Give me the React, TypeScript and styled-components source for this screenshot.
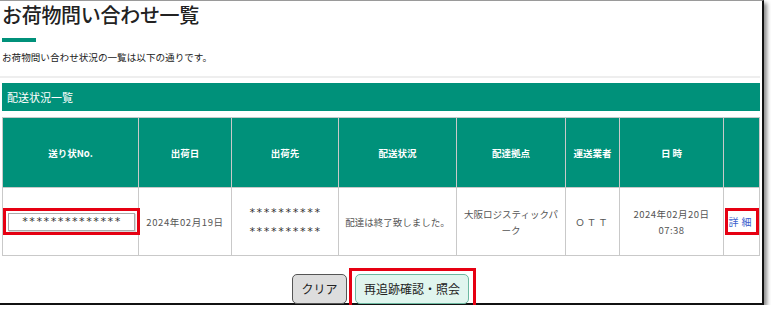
import React from 'react';
import styled, { createGlobalStyle } from 'styled-components';

interface Shipment {
  invoiceNo: string;
  shippedOn: string;
  destination: string[];
  status: string;
  depot: string;
  carrier: string;
  dateTime: string[];
}

const GlobalStyle = createGlobalStyle`
  html, body {
    margin: 0;
    padding: 0;
    background: #ffffff;
  }
  body {
    font-family: "Noto Sans CJK JP", "Noto Sans", sans-serif;
  }
`;

const Frame = styled.div`
  box-sizing: border-box;
  width: 764px;
  height: 305px;
  border-top: 1px solid #9a9a9a;
  border-right: 2px solid #111111;
  border-bottom: 2px solid #111111;
  box-shadow: 3px 3px 4px rgba(0, 0, 0, 0.45);
  background: #ffffff;
  display: flex;
  flex-direction: column;
  padding: 0 2px;

  & > * {
    flex-shrink: 0;
  }
`;

const Title = styled.h1`
  margin: 0;
  padding-top: 1px;
  height: 37px;
  box-sizing: border-box;
  font-size: 20px;
  line-height: 26px;
  font-weight: 500;
  color: #222222;
  letter-spacing: -0.3px;
`;

const TitleBar = styled.div`
  width: 34px;
  height: 4px;
  background: #00917a;
`;

const Lead = styled.p`
  box-sizing: border-box;
  margin: 0;
  padding-top: 9px;
  height: 34px;
  font-size: 9.6px;
  line-height: 12px;
  color: #222222;
`;

const Divider = styled.hr`
  margin: 0 0 0 -2px;
  width: 760px;
  border: none;
  border-top: 2px solid #eeeeee;
`;

const SectionBar = styled.div`
  margin-top: 5px;
  height: 28px;
  width: 758px;
  background: #00917a;
  color: #ffffff;
  font-size: 11px;
  line-height: 28px;
  padding-left: 5px;
  box-sizing: border-box;
`;

const Table = styled.table`
  margin-top: 6px;
  width: 757px;
  border-collapse: collapse;
  table-layout: fixed;
`;

const HeadCell = styled.th`
  height: 69px;
  background: #00917a;
  border: 1px solid #c9c9c9;
  color: #ffffff;
  font-size: 9.5px;
  font-weight: 700;
  text-align: center;
  padding: 0;
`;

const BodyCell = styled.td<{ $pad?: number; $spread?: number }>`
  height: 67px;
  border: 1px solid #c9c9c9;
  color: #555555;
  font-size: 9.5px;
  line-height: 16px;
  letter-spacing: ${(p) => p.$spread ?? 0}px;
  text-align: center;
  padding: 0 ${(p) => p.$pad ?? 0}px;
`;

const Masked = styled.div`
  font-family: "DejaVu Sans Mono", monospace;
  font-size: 11px;
  letter-spacing: 0.6px;
  color: #333333;
  line-height: 19px;
`;

const Highlight = styled.span<{ $w: number; $h: number }>`
  box-sizing: border-box;
  display: inline-flex;
  align-items: center;
  justify-content: center;
  width: ${(p) => p.$w}px;
  height: ${(p) => p.$h}px;
  border: 3px solid #e60012;
`;

const InvoiceInput = styled.input`
  box-sizing: border-box;
  width: 127px;
  height: 18px;
  border: 1px solid #aaaaaa;
  box-shadow: 1px 1px 1px rgba(0, 0, 0, 0.15);
  font-family: "DejaVu Sans Mono", monospace;
  font-size: 11px;
  letter-spacing: 0.5px;
  color: #333333;
  text-align: center;
  padding: 0;
  background: #ffffff;
`;

const DetailLink = styled.a`
  color: #3a5fcd;
  font-size: 10px;
  letter-spacing: 3px;
  text-decoration: none;
`;

const Actions = styled.div`
  display: flex;
  justify-content: center;
  align-items: center;
  gap: 2px;
  margin-top: 12px;
  padding-left: 6px;
`;

const Button = styled.button<{ $primary?: boolean }>`
  box-sizing: border-box;
  height: 30px;
  padding: 0 8px;
  border-radius: 5px;
  font-family: inherit;
  font-size: 12px;
  color: #222222;
  border: 1px solid ${(p) => (p.$primary ? '#6bb8a0' : '#555555')};
  background: ${(p) => (p.$primary ? '#e0f5ee' : '#dddddd')};
`;

const headers = ['送り状No.', '出荷日', '出荷先', '配送状況', '配達拠点', '運送業者', '日 時', ''];
const widths = [136, 93, 107, 118, 109, 54, 104, 36];

const rows: Shipment[] = [
  {
    invoiceNo: '**************',
    shippedOn: '2024年02月19日',
    destination: ['**********', '**********'],
    status: '配達は終了致しました。',
    depot: '大阪ロジスティックパーク',
    carrier: 'ＯＴＴ',
    dateTime: ['2024年02月20日', '07:38'],
  },
];

export default function App() {
  return (
    <>
      <GlobalStyle />
      <Frame>
        <Title>お荷物問い合わせ一覧</Title>
        <TitleBar />
        <Lead>お荷物問い合わせ状況の一覧は以下の通りです。</Lead>
        <Divider />
        <SectionBar>配送状況一覧</SectionBar>
        <Table>
          <colgroup>
            {widths.map((w, i) => (
              <col key={i} style={{ width: w }} />
            ))}
          </colgroup>
          <thead>
            <tr>
              {headers.map((h, i) => (
                <HeadCell key={i}>{h}</HeadCell>
              ))}
            </tr>
          </thead>
          <tbody>
            {rows.map((r, i) => (
              <tr key={i}>
                <BodyCell>
                  <Highlight $w={137} $h={27}>
                    <InvoiceInput readOnly value={r.invoiceNo} />
                  </Highlight>
                </BodyCell>
                <BodyCell $spread={0.6}>{r.shippedOn}</BodyCell>
                <BodyCell>
                  {r.destination.map((d, j) => (
                    <Masked key={j}>{d}</Masked>
                  ))}
                </BodyCell>
                <BodyCell>{r.status}</BodyCell>
                <BodyCell $pad={6}>{r.depot}</BodyCell>
                <BodyCell $spread={2}>{r.carrier}</BodyCell>
                <BodyCell $spread={0.5}>
                  {r.dateTime[0]}
                  <br />
                  {r.dateTime[1]}
                </BodyCell>
                <BodyCell>
                  <Highlight $w={34} $h={27}>
                    <DetailLink href="#">詳細</DetailLink>
                  </Highlight>
                </BodyCell>
              </tr>
            ))}
          </tbody>
        </Table>
        <Actions>
          <Button>クリア</Button>
          <Highlight $w={127} $h={41}>
            <Button $primary>再追跡確認・照会</Button>
          </Highlight>
        </Actions>
      </Frame>
    </>
  );
}
